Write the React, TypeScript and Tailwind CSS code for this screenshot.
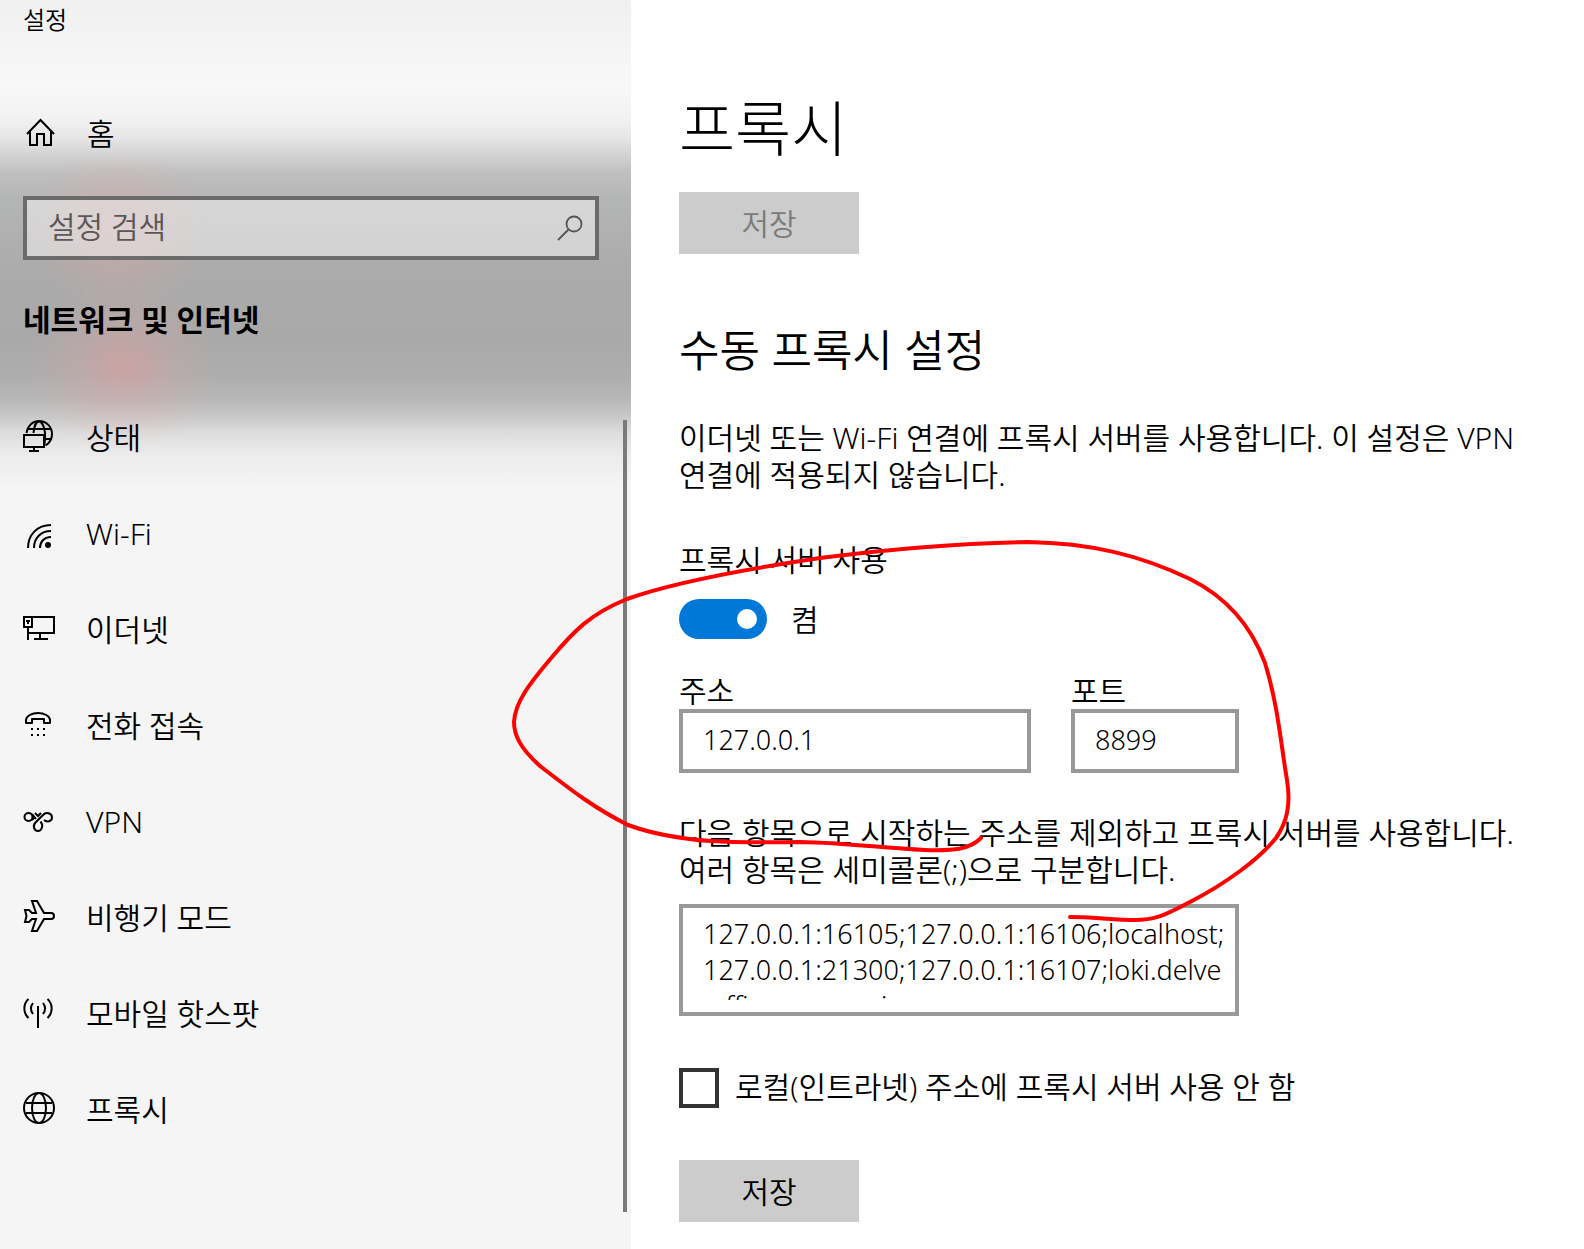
import type { ReactNode } from "react";

function Icon({ children }: { children: ReactNode }) {
  return (
    <svg viewBox="0 0 32 32" fill="none" stroke="currentColor" strokeWidth="2" className="h-8 w-8 shrink-0" aria-hidden="true">
      {children}
    </svg>
  );
}

const navItems = [
  {
    label: "상태",
    icon: (
      <>
        <path d="M3.500 13C4.500 6 9.500 1 16 1c7.500 0 13 6 13 13 0 5-2.500 9-6.500 11.500M5 9h23M22 19h6.500M10.500 13C11 7 13 1.500 16 1.500S21.500 7 22 13M22 13c0.300 4 0 8-0.500 11" />
        <path d="M1 15h20v12H1zM11 27v4M6 31h10" />
      </>
    ),
  },
  {
    label: "Wi-Fi",
    icon: (
      <>
        <path d="M5 32C5 19 14 9 28 9M11 32c0-10 7-17 17-17M17 32c0-6 4-11 11-11" />
        <circle cx="25" cy="29" r="3" fill="currentColor" stroke="none" />
      </>
    ),
  },
  {
    label: "이더넷",
    icon: (
      <>
        <path d="M10 5h21v16H5M17 21v6M11 27h14M5 15v13" />
        <path d="M1 5h8v10H1zM3 9h4M5 9v3" />
      </>
    ),
  },
  {
    label: "전화 접속",
    icon: (
      <>
        <path d="M3 15v-3c0-4 6-7 12-7s12 3 12 7v3h-6v-4H9v4z" strokeLinejoin="round" />
        <path d="M8 21h2M14 21h2M20 21h2M8 27h2M14 27h2M20 27h2" />
      </>
    ),
  },
  {
    label: "VPN",
    icon: (
      <>
        <circle cx="5.500" cy="13" r="4" />
        <path d="M9 10l4 5M9 16l3-3M12 9l3 3 3-3" />
        <path d="M17.500 17.500c3.500 4 1 9.500-2.500 9.500s-6-5-2.500-8.500L20 11c3-3.500 9-2 9 2.500 0 4-5 5-8 2.500" />
      </>
    ),
  },
  {
    label: "비행기 모드",
    icon: (
      <path d="M9 1h5l7 12h7c4 0 4 6 0 6h-7l-7 12H9l4-12H9l-3 3H2l1.500-6L2 10h4l3 3h4z" />
    ),
  },
  {
    label: "모바일 핫스팟",
    icon: (
      <path d="M5.500 3C0 8 0 17 5.500 22M10 7c-3 4-3 7 0 11M24.500 3c5.500 5 5.500 14 0 19M20 7c3 4 3 7 0 11M15 10v22" />
    ),
  },
  {
    label: "프록시",
    icon: (
      <>
        <circle cx="16" cy="16" r="15" />
        <ellipse cx="16" cy="16" rx="7" ry="15" />
        <path d="M3 11h26M3 21h26" />
      </>
    ),
  },
];

function Sidebar() {
  return (
    <aside className="relative flex w-[631px] shrink-0 flex-col bg-[#f5f5f5]">
      {/* Blurred backdrop */}
      <div className="absolute inset-x-0 top-0 h-[520px] bg-[linear-gradient(to_bottom,#f0f0f0_0px,#f8f8f8_85px,#f2f2f2_118px,#e6e6e6_138px,#d4d4d4_154px,#c0c0c0_172px,#b4b5b5_200px,#ababab_270px,#a9a9a9_340px,#adadad_375px,#b8b8b8_400px,#cacaca_418px,#dedede_434px,#ececec_455px,#f5f5f5_490px)]" />
      <div className="absolute top-[150px] left-7 h-40 w-[180px] bg-[radial-gradient(closest-side,#f0a0a04d,#f0a0a033_50%,#f0a0a000)]" />
      <div className="absolute top-[280px] left-7 h-[170px] w-[190px] bg-[radial-gradient(closest-side,#f0989873,#f0a0a033_50%,#f0a0a000)]" />

      <div className="relative flex flex-1 flex-col pl-[23px]">
        <p className="text-2xl leading-10">설정</p>

        <a href="#home" className="mt-[69px] flex h-12 items-center gap-8">
          <Icon>
            <path d="M4 17L17.500 3 31 17M7 14v14h7V17h7v11h7V14" />
          </Icon>
          <span>홈</span>
        </a>

        <div className="mt-[39px] mr-8 flex h-16 items-center border-4 border-[#6b6b6b] bg-white/45 pr-3 pl-[21px]">
          <input
            type="search"
            aria-label="설정 검색"
            placeholder="설정 검색"
            className="min-w-0 flex-1 bg-transparent pb-1 outline-none placeholder:text-[#5c5656]"
          />
          <svg viewBox="0 0 26 26" fill="none" stroke="#555" strokeWidth="1.800" className="h-[26px] w-[26px]" aria-hidden="true">
            <circle cx="17" cy="9" r="7.500" />
            <path d="M11.500 14.500L1 25" />
          </svg>
        </div>

        <h2 className="mt-[38px] leading-[44px] font-bold">네트워크 및 인터넷</h2>

        <nav className="mt-[78px] mr-1 flex h-[792px] border-r-4 border-[#7a7a7a]">
          <ul className="flex flex-col gap-16">
            {navItems.map((item) => (
              <li key={item.label}>
                <a href="#" className="flex h-8 items-center gap-[31px]">
                  <Icon>{item.icon}</Icon>
                  <span className="pt-0.5">{item.label}</span>
                </a>
              </li>
            ))}
          </ul>
        </nav>
      </div>
    </aside>
  );
}

export default function App() {
  return (
    <div className="relative flex min-h-screen overflow-hidden bg-white font-['Noto_Sans','Noto_Sans_CJK_KR',sans-serif] text-[30px] leading-[37px] font-[350] break-keep text-black">
      <Sidebar />

      <main className="flex min-w-0 flex-1 flex-col items-start pt-[91px] pr-6 pl-12">
        <h1 className="text-[61px] leading-[76px] font-light">프록시</h1>
        <button type="button" disabled className="mt-[25px] h-[62px] w-[180px] bg-[#ccc] text-[#7a7a7a]">
          저장
        </button>

        <h2 className="mt-[66px] text-[44px] leading-[60px]">수동 프록시 설정</h2>
        <p className="mt-[39px]">
          이더넷 또는 Wi-Fi 연결에 프록시 서버를 사용합니다. 이 설정은 VPN 연결에 적용되지 않습니다.
        </p>

        <label htmlFor="use-proxy" className="mt-12">프록시 서버 사용</label>
        <div className="mt-[21px] flex h-10 items-center gap-6">
          <span className="relative flex">
            <input
              id="use-proxy"
              type="checkbox"
              role="switch"
              defaultChecked
              className="h-10 w-[88px] appearance-none rounded-full bg-[#0078d7]"
            />
            <span className="pointer-events-none absolute top-[10px] right-[10px] h-5 w-5 rounded-full bg-white" />
          </span>
          <span>켬</span>
        </div>

        <div className="mt-[33px] flex gap-10">
          <div className="flex flex-col">
            <label htmlFor="address">주소</label>
            <input
              id="address"
              defaultValue="127.0.0.1"
              className="h-16 w-[352px] border-4 border-[#999] px-5 pb-1 text-[27px]"
            />
          </div>
          <div className="flex flex-col">
            <label htmlFor="port">포트</label>
            <input
              id="port"
              defaultValue="8899"
              className="h-16 w-[168px] border-4 border-[#999] px-5 pb-1 text-[27px]"
            />
          </div>
        </div>

        <label htmlFor="exceptions" className="mt-[41px]">
          다음 항목으로 시작하는 주소를 제외하고 프록시 서버를 사용합니다. 여러 항목은 세미콜론(;)으로 구분합니다.
        </label>
        <div className="mt-4 flex h-28 w-[560px] border-4 border-[#999] pt-2 pb-3 pl-5">
          <textarea
            id="exceptions"
            defaultValue={"127.0.0.1:16105;127.0.0.1:16106;localhost;\n127.0.0.1:21300;127.0.0.1:16107;loki.delve\n.office.com;mai"}
            className="w-full resize-none overflow-hidden text-[27px] leading-9 whitespace-pre outline-none"
          />
        </div>

        <div className="mt-[52px] flex h-10 items-center gap-4">
          <input id="local" type="checkbox" className="h-10 w-10 appearance-none border-4 border-[#333] bg-white" />
          <label htmlFor="local" className="pb-1">로컬(인트라넷) 주소에 프록시 서버 사용 안 함</label>
        </div>

        <button type="button" className="mt-[52px] h-[62px] w-[180px] bg-[#ccc]">
          저장
        </button>
      </main>

      {/* Hand-drawn marker */}
      <svg
        viewBox="0 0 1584 1249"
        fill="none"
        stroke="#f00"
        strokeWidth="4"
        strokeLinecap="round"
        strokeLinejoin="round"
        className="pointer-events-none absolute top-0 left-0 h-[1249px] w-[1584px]"
        aria-hidden="true"
      >
        <path d="M981 838C970 849 955 851 925 850C880 848 850 843 800 842C740 843 680 844 628 825C590 806 565 785 540 766C520 748 514 735 514 722C515 702 530 683 552 657C574 631 590 614 627 599C680 580 760 567 820 558C890 549 960 543 1028 542C1090 543 1140 555 1190 579C1228 598 1252 628 1265 663C1278 705 1281 745 1287 780C1291 805 1287 822 1276 838C1258 860 1225 884 1190 902C1165 915 1155 921 1130 920C1105 919 1090 917 1070 917" />
      </svg>
    </div>
  );
}
